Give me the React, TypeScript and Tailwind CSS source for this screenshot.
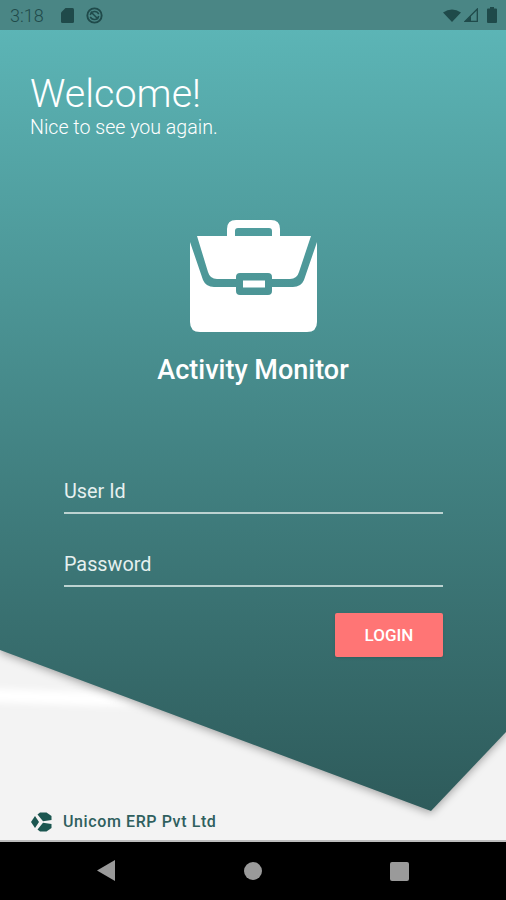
import React from 'react';

const roboto = 'font-[Roboto,sans-serif]';

// Status bar icons
const SdIcon = () => (
  <svg width="13" height="15" viewBox="0 0 13 15" fill="#1f4a4a">
    <path d="M4.5 0H11.5A1.5 1.5 0 0113 1.5V13.5A1.5 1.5 0 0111.5 15H1.5A1.5 1.5 0 010 13.5V4.5Z" />
  </svg>
);

const DndIcon = () => (
  <svg width="17" height="17" viewBox="0 0 18 18" fill="none" stroke="#1f4a4a" strokeWidth="2">
    <circle cx="9" cy="9" r="7.6" />
    <path d="M4.5 8.5A4.8 4.8 0 0113.5 7.5M13.5 9.5A4.8 4.8 0 014.5 10.5M5 5L13 13" strokeWidth="1.6" />
  </svg>
);

const WifiIcon = () => (
  <svg width="18" height="13" viewBox="0 0 18 13" fill="#1f4a4a">
    <path d="M0 3.5Q9 -2.5 18 3.5L9 13Z" />
  </svg>
);

const SignalIcon = () => (
  <svg width="14" height="14" viewBox="0 0 14 14" fill="none">
    <path d="M13.3 1V13.3H1Z" stroke="#1f4a4a" strokeWidth="1.3" />
    <path d="M7 7.5V13H1.5Z" fill="#1f4a4a" />
  </svg>
);

const BatteryIcon = () => (
  <svg width="10" height="16" viewBox="0 0 10 16" fill="#1f4a4a">
    <path d="M3 0H7V1.5H9A1 1 0 0110 2.5V15A1 1 0 019 16H1A1 1 0 010 15V2.5A1 1 0 011 1.5H3Z" />
  </svg>
);

const Briefcase = () => (
  <svg width="127" height="112" viewBox="0 0 127 112" fill="#fff">
    <path
      fillRule="evenodd"
      d="M37 16V9Q37 0 46 0H81Q90 0 90 9V16H82V11Q82 8 79 8H48Q45 8 45 11V16Z"
    />
    <path d="M7 16H121L109 52Q107 59 100 59H82V57Q82 53 78 53H50Q46 53 46 57V59H27Q20 59 18 52Z" />
    <rect x="53" y="60.5" width="22" height="7" />
    <path d="M0 22L13 60Q16 67 24 67H46V71Q46 75 50 75H78Q82 75 82 71V67H103Q111 67 114 60L127 22V102Q127 112 117 112H10Q0 112 0 102Z" />
  </svg>
);

const UnicomLogo = () => (
  <svg width="22" height="20" viewBox="0 0 22 20" fill="#1b5650">
    <path d="M5 4L9 10L5 16L1 10Z" />
    <path d="M7.5 2.5L10 0.5H16.5L21.5 4V8L13 9.2Z" />
    <path d="M13 10.8L21.5 12V16L16.5 19.5H10L7.5 17.5Z" />
  </svg>
);

const Field = ({ label }: { label: string }) => (
  <div className="border-b-2 border-[#bcd3d1] pb-[6px]">
    <span className="block text-[19.8px] leading-[28px] text-[#e6f0ef]">{label}</span>
  </div>
);

export default function App() {
  return (
    <div className={`${roboto} relative flex h-[900px] w-[506px] flex-col overflow-hidden bg-[#f3f3f3]`}>
      {/* White streak behind the teal backdrop */}
      <div className="absolute left-[-20px] top-[692px] h-[14px] w-[230px] rotate-2 bg-gradient-to-r from-white from-[55%] to-transparent blur-[3px]" />

      {/* Teal backdrop */}
      <div className="absolute inset-0 drop-shadow-[0_2px_4px_rgba(0,0,0,0.35)]">
        <div className="h-full w-full bg-gradient-to-b from-[#5cb5b6] from-[3%] to-[#2e5b5b] to-[90%] [clip-path:polygon(0_0,506px_0,506px_732px,431px_811px,0_650px)]" />
      </div>

      {/* Status bar */}
      <div className="relative flex h-[30px] items-center bg-[#4a8685] pl-[10px] pr-[9px]">
        <span className="text-[18px] font-light text-[#1f4a4a]">3:18</span>
        <span className="ml-[17px]"><SdIcon /></span>
        <span className="ml-[12px]"><DndIcon /></span>
        <div className="ml-auto flex items-center gap-[3px]">
          <WifiIcon />
          <SignalIcon />
          <span className="ml-[6px]"><BatteryIcon /></span>
        </div>
      </div>

      <main className="relative flex flex-1 flex-col">
        <div className="pl-[30px] pt-[40px] text-white">
          <h1 className="text-[39.5px] font-light leading-[48px]">Welcome!</h1>
          <p className="-mt-[2px] text-[19.6px] font-light leading-[24px]">Nice to see you again.</p>
        </div>

        <div className="mt-[80px] flex flex-col items-center">
          <Briefcase />
          <h2 className="mt-[22px] text-[27px] font-medium leading-[32px] text-white">Activity Monitor</h2>
        </div>

        <form className="ml-[64px] mr-[63px] mt-[92px] flex flex-col gap-[37px]">
          <Field label="User Id" />
          <Field label="Password" />
        </form>

        <div className="mr-[63px] mt-[26px] flex justify-end">
          <button className="h-[44px] w-[108px] rounded-[2px] bg-[#ff7575] pt-px text-[17px] font-medium text-[#fff] shadow-sm">
            LOGIN
          </button>
        </div>

        <div className="mt-auto mb-[8px] flex h-[20px] items-center pl-[30px]">
          <UnicomLogo />
          <span className="ml-[11px] text-[16px] font-medium tracking-[0.6px] text-[#2f5f5e]">Unicom ERP Pvt Ltd</span>
        </div>
        <div className="h-[2px] bg-[#bdbdbd]" />
      </main>

      {/* Navigation bar */}
      <div className="relative flex h-[58px] items-center justify-center bg-black">
        <div className="relative h-full w-full">
          <svg className="absolute left-[97px] top-[18px]" width="18" height="22" viewBox="0 0 18 22" fill="#9a9a9a">
            <path d="M18 0V21L0 10.5Z" />
          </svg>
          <span className="absolute left-[244px] top-[20px] h-[18px] w-[18px] rounded-full bg-[#9a9a9a]" />
          <span className="absolute left-[390px] top-[20px] h-[19px] w-[19px] rounded-[2px] bg-[#9a9a9a]" />
        </div>
      </div>
    </div>
  );
}
